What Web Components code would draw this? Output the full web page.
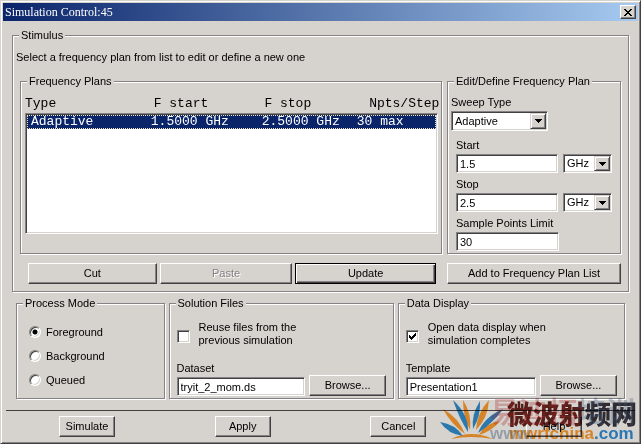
<!DOCTYPE html>
<html lang="en">
<head>
<meta charset="utf-8">
<title>Simulation Control:45</title>
<style>
  html, body { margin: 0; min-height: 100%; background: #d6d3ce; }
  body {
    font: 11px/13px "Liberation Sans", Arial, sans-serif;
    color: #000;
    --face: #d6d3ce; --light: #fff; --shade: #848284; --dark: #424142; --navy: #0a246a;
  }
</style>
</head>
<body>
<sim-dialog></sim-dialog>

<script>
const define = (name, html, setup) => {
  const template = document.createElement('template');
  template.innerHTML = html;
  customElements.define(name, class extends HTMLElement {
    constructor() {
      super();
      this.attachShadow({ mode: 'open' }).append(template.content.cloneNode(true));
    }
    connectedCallback() {
      if (setup) setup(this, this.shadowRoot);
    }
  });
};

const BASE = `
  *, *::before { box-sizing: border-box; }
  :host { display: block; min-width: 0; box-sizing: border-box; }
  button, input, select { font: inherit; color: inherit; margin: 0; border-radius: 0; appearance: none; outline: 0; }
`;

/* Titled frame with an etched line */
define('group-box', `
<style>${BASE}
  :host { display: grid; }
  fieldset {
    margin: 0; min-width: 0; padding: 0;
    border: 1px solid var(--shade);
    box-shadow: 1px 1px var(--light), inset 1px 1px var(--light);
  }
  legend { margin-left: 6px; padding: 0 2px; height: 14px; line-height: 14px; background: var(--face); }
</style>
<fieldset><legend></legend><slot></slot></fieldset>`,
(el, root) => { root.querySelector('legend').textContent = el.getAttribute('label'); });

/* Raised push button */
define('push-button', `
<style>${BASE}
  :host { display: grid; }
  button {
    height: 21px; padding: 0 2px; background: var(--face); white-space: nowrap;
    border: 1px solid; border-color: var(--light) var(--dark) var(--dark) var(--light);
    box-shadow: inset -1px -1px var(--shade);
  }
  button:disabled { color: var(--shade); text-shadow: 1px 1px var(--light); }
  :host([default]) button {
    border-color: #000;
    box-shadow: inset 1px 1px var(--light), inset -1px -1px var(--dark), inset -2px -2px var(--shade);
  }
</style>
<button type="button"><slot></slot></button>`,
(el, root) => { root.querySelector('button').disabled = el.hasAttribute('disabled'); });

const SUNKEN = `
  border: 1px solid; border-color: var(--shade) var(--light) var(--light) var(--shade);
  box-shadow: inset 1px 1px var(--dark), inset -1px -1px var(--face);
  background: #fff;
`;

/* Label above a sunken text box; an extra control can follow the box */
define('text-field', `
<style>${BASE}
  label { display: block; height: 18px; line-height: 18px; }
  div { display: flex; gap: 5px; }
  input { ${SUNKEN} flex: 1; width: 0; min-width: 0; height: 19px; padding: 0 3px; }
</style>
<label for="box"></label>
<div><input id="box" type="text"><slot></slot></div>`,
(el, root) => {
  root.querySelector('label').textContent = el.getAttribute('label');
  root.querySelector('input').value = el.getAttribute('value');
});

/* Drop-down list */
define('pick-list', `
<style>${BASE}
  label { display: block; height: 18px; line-height: 18px; }
  :host([unlabelled]) label { display: none; }
  div { display: grid; }
  select { ${SUNKEN} grid-area: 1 / 1; height: 20px; padding: 0 20px 0 3px; }
  :host([unlabelled]) select { height: 19px; }
  span {
    grid-area: 1 / 1; place-self: stretch end; pointer-events: none;
    display: grid; place-items: center; width: 16px; margin: 2px;
    background: var(--face);
    border: 1px solid; border-color: var(--face) var(--dark) var(--dark) var(--face);
    box-shadow: inset 1px 1px var(--light), inset -1px -1px var(--shade);
  }
  svg { display: block; }
</style>
<label for="list"></label>
<div>
  <select id="list"><option></option></select>
  <span><svg width="7" height="4" viewBox="0 0 7 4" shape-rendering="crispEdges"><path d="M0 0h7v1h-1v1h-1v1h-1v1h-1v-1h-1v-1h-1v-1h-1z"/></svg></span>
</div>`,
(el, root) => {
  root.querySelector('label').textContent = el.getAttribute('label');
  root.querySelector('select').setAttribute('aria-label', el.getAttribute('label'));
  root.querySelector('option').textContent = el.getAttribute('value');
});

/* Tick box */
define('check-item', `
<style>${BASE}
  label { display: flex; align-items: center; gap: 9px; }
  input {
    ${SUNKEN} flex: none; width: 13px; height: 13px;
    display: grid; place-items: center;
  }
  .box { display: grid; flex: none; padding-top: 4px; }
  .box > * { grid-area: 1 / 1; place-self: center; }
  svg { pointer-events: none; visibility: hidden; }
  input:checked + svg { visibility: visible; }
</style>
<label>
  <span class="box"><input type="checkbox"><svg width="7" height="7" viewBox="0 0 7 7" shape-rendering="crispEdges"><path d="M0 2h1v1h1v1h1v-1h1v-1h1v-1h1v-1h1v3h-1v1h-1v1h-1v1h-1v1h-1v-1h-1v-1h-1z"/></svg></span>
  <slot></slot>
</label>`,
(el, root) => { root.querySelector('input').checked = el.hasAttribute('checked'); });

/* Exclusive choices; one root keeps the radios in a single group */
define('mode-choices', `
<style>${BASE}
  :host { display: grid; gap: 6px; }
  label { display: flex; align-items: center; gap: 5px; height: 18px; }
  input {
    width: 12px; height: 12px; border-radius: 50%; background: #fff;
    border: 1px solid; border-color: var(--shade) var(--light) var(--light) var(--shade);
    box-shadow: inset 1px 1px var(--dark), inset -1px -1px var(--face);
  }
  input:checked { background: radial-gradient(circle at center, #000 2px, #fff 3px); }
</style>
<label><input type="radio" name="mode" checked>Foreground</label>
<label><input type="radio" name="mode">Background</label>
<label><input type="radio" name="mode">Queued</label>`);

/* Column headings over a sunken list with one selected row */
define('plan-table', `
<style>${BASE}
  :host { display: grid; }
  table {
    display: grid; grid-template-rows: 18px 121px; min-width: 0;
    font: 13px/13px "Liberation Mono", "Courier New", monospace; white-space: pre;
  }
  thead, tbody { display: block; }
  tbody { ${SUNKEN} padding: 1px; }
  tr { display: grid; }
  thead tr { grid-template-columns: 129fr 111fr 105fr 69fr; line-height: 18px; }
  tbody tr {
    grid-template-columns: 121fr 112fr 96fr 80fr; height: 14px; padding-left: 4px; line-height: 14px;
    background: var(--navy); color: #fff; outline: 1px dotted #e8e4c0; outline-offset: -1px;
  }
  th, td { padding: 0; text-align: left; font-weight: 400; min-width: 0; }
</style>
<table>
  <thead><tr><th>Type</th><th>F start</th><th>F stop</th><th>Npts/Step</th></tr></thead>
  <tbody><tr><td>Adaptive</td><td>1.5000 GHz</td><td>2.5000 GHz</td><td>30 max</td></tr></tbody>
</table>`);

/* Caption strip */
define('title-bar', `
<style>${BASE}
  :host {
    display: flex; align-items: center; justify-content: space-between;
    height: 18px; padding: 0 2px; color: #fff;
    background: linear-gradient(90deg, #0a246a, #a6caf0);
  }
  h1 { margin: 0; font: 12px/18px "Liberation Serif", "Times New Roman", serif; }
  button {
    display: grid; place-items: center; width: 16px; height: 14px; padding: 0; background: var(--face);
    border: 1px solid; border-color: var(--light) var(--dark) var(--dark) var(--light);
    box-shadow: inset -1px -1px var(--shade);
  }
</style>
<h1><slot></slot></h1>
<button type="button" aria-label="Close"><svg width="8" height="7" viewBox="0 0 8 7" shape-rendering="crispEdges"><path d="M0 0h2v1h1v1h2v-1h1v-1h2v1h-1v1h-1v1h-1v1h1v1h1v1h1v1h-2v-1h-1v-1h-2v1h-1v1h-2v-1h1v-1h1v-1h1v-1h-1v-1h-1v-1h-1z"/></svg></button>`);

/* Site mark laid over the lower right corner */
define('site-mark', `
<style>${BASE}
  :host {
    display: flex; align-items: center; pointer-events: none; mix-blend-mode: multiply;
    font-family: "Liberation Sans", "Noto Sans CJK SC", sans-serif;
  }
  svg { flex: none; margin-right: -13px; }
  .words { display: grid; white-space: nowrap; }
  .front, .back { grid-area: 1 / 1; }
  .front { padding: 4px 0 0 17px; }
  b, i { display: block; font-style: normal; }
  .front b { font: 900 26px/25px "Noto Sans CJK SC", sans-serif; color: #38343c; }
  .front b span { color: #64241e; }
  .front i { font: 700 17px/17px "Liberation Sans", sans-serif; color: #ffa030; padding-left: 2px; }
  .front i span { color: #3090e0; }
  .back b { font: 700 29px/29px "Noto Sans CJK SC", sans-serif; color: #4a6c9c; opacity: .3; }
  .back b span { color: #c02830; }
  .back i { font: 700 17px/17px "Liberation Sans", sans-serif; color: #406088; opacity: .4; }
</style>
<svg width="64" height="42" viewBox="0 0 64 42">
  <g fill="#ffa030">
    <path d="M4 11Q20 20 26 36Q12 26 4 11Z"/>
    <path d="M24 2Q33 16 31 32Q24 19 24 2Z"/>
    <path d="M50 2Q49 20 37 32Q38 15 50 2Z"/>
    <path d="M61 23Q46 25 40 37Q53 33 61 23Z"/>
    <path d="M12 41Q32 31 54 41Q32 37 12 41Z"/>
  </g>
  <g fill="#3490d4">
    <path d="M1 24Q9 36 24 38Q16 26 1 24Z"/>
    <path d="M14 2Q30 17 29 34Q20 20 14 2Z"/>
    <path d="M41 3Q42 18 34 31Q32 17 41 3Z"/>
    <path d="M64 11Q45 19 39 35Q54 25 64 11Z"/>
  </g>
</svg>
<div class="words">
  <div class="back"><b><span>易迪拓</span>培训</b><i>www.</i></div>
  <div class="front"><b><span>微波射</span>频网</b><i>mwrfchina<span>.com</span></i></div>
</div>`);

/* The whole dialog */
define('sim-dialog', `
<style>${BASE}
  :host {
    position: relative; min-height: 100vh; padding: 1px 1px 2px;
    background: var(--face); border: 1px solid;
    border-color: var(--face) var(--dark) var(--dark) var(--face);
    box-shadow: inset 1px 1px var(--light), inset -1px -1px var(--shade);
  }
  title-bar { margin: 1px; }
  main { padding: 6px 10px 0; }
  p { margin: 8px 3px 10px; line-height: 14px; }
  .plans, .commands { display: grid; grid-template-columns: 422fr 174fr; gap: 5px; padding: 0 7px; }
  .list { padding: 7px 3px 19px 4px; }
  .edit { padding: 5px 0 1px; display: grid; gap: 2px; }
  .edit > :first-child { margin: 0 72px 3px 3px; }
  .edit > text-field { margin: 0 8px; }
  .edit > .short { margin-right: 61px; }
  .edit pick-list[unlabelled] { width: 49px; }
  .commands { padding: 9px 7px 7px; }
  .editing { display: grid; grid-template-columns: 129fr 133fr 141fr; gap: 3px; padding: 0 6px 0 8px; }
  .options { display: grid; grid-template-columns: 149fr 226fr 228fr; gap: 4px; padding: 4px 4px 0; }
  mode-choices { padding: 13px 12px 8px; }
  .file { padding: 11px 7px 2px; }
  .file check-item { margin-bottom: 12px; }
  .row { display: grid; grid-template-columns: 130fr 77fr; gap: 4px; align-items: end; }
  hr { margin: 11px 4px 5px; border: 0; border-top: 1px solid var(--dark); }
  footer { display: flex; justify-content: space-between; padding: 0 57px 4px; }
  footer push-button { width: 56px; }
  site-mark { position: absolute; right: 3px; bottom: 1px; }
</style>
<title-bar>Simulation Control:45</title-bar>
<main>
  <group-box label="Stimulus">
    <p>Select a frequency plan from list to edit or define a new one</p>
    <div class="plans">
      <group-box label="Frequency Plans"><div class="list"><plan-table></plan-table></div></group-box>
      <group-box label="Edit/Define Frequency Plan">
        <div class="edit">
          <pick-list label="Sweep Type" value="Adaptive"></pick-list>
          <text-field label="Start" value="1.5"><pick-list unlabelled label="Start unit" value="GHz"></pick-list></text-field>
          <text-field label="Stop" value="2.5"><pick-list unlabelled label="Stop unit" value="GHz"></pick-list></text-field>
          <text-field class="short" label="Sample Points Limit" value="30"></text-field>
        </div>
      </group-box>
    </div>
    <div class="commands">
      <div class="editing">
        <push-button>Cut</push-button>
        <push-button disabled>Paste</push-button>
        <push-button default>Update</push-button>
      </div>
      <push-button>Add to Frequency Plan List</push-button>
    </div>
  </group-box>
  <div class="options">
    <group-box label="Process Mode"><mode-choices></mode-choices></group-box>
    <group-box label="Solution Files">
      <div class="file">
        <check-item>Reuse files from the<br>previous simulation</check-item>
        <div class="row"><text-field label="Dataset" value="tryit_2_mom.ds"></text-field><push-button>Browse...</push-button></div>
      </div>
    </group-box>
    <group-box label="Data Display">
      <div class="file">
        <check-item checked>Open data display when<br>simulation completes</check-item>
        <div class="row"><text-field label="Template" value="Presentation1"></text-field><push-button>Browse...</push-button></div>
      </div>
    </group-box>
  </div>
</main>
<hr>
<footer>
  <push-button>Simulate</push-button>
  <push-button>Apply</push-button>
  <push-button>Cancel</push-button>
  <push-button>Help</push-button>
</footer>
<site-mark></site-mark>`);
</script>
</body>
</html>
